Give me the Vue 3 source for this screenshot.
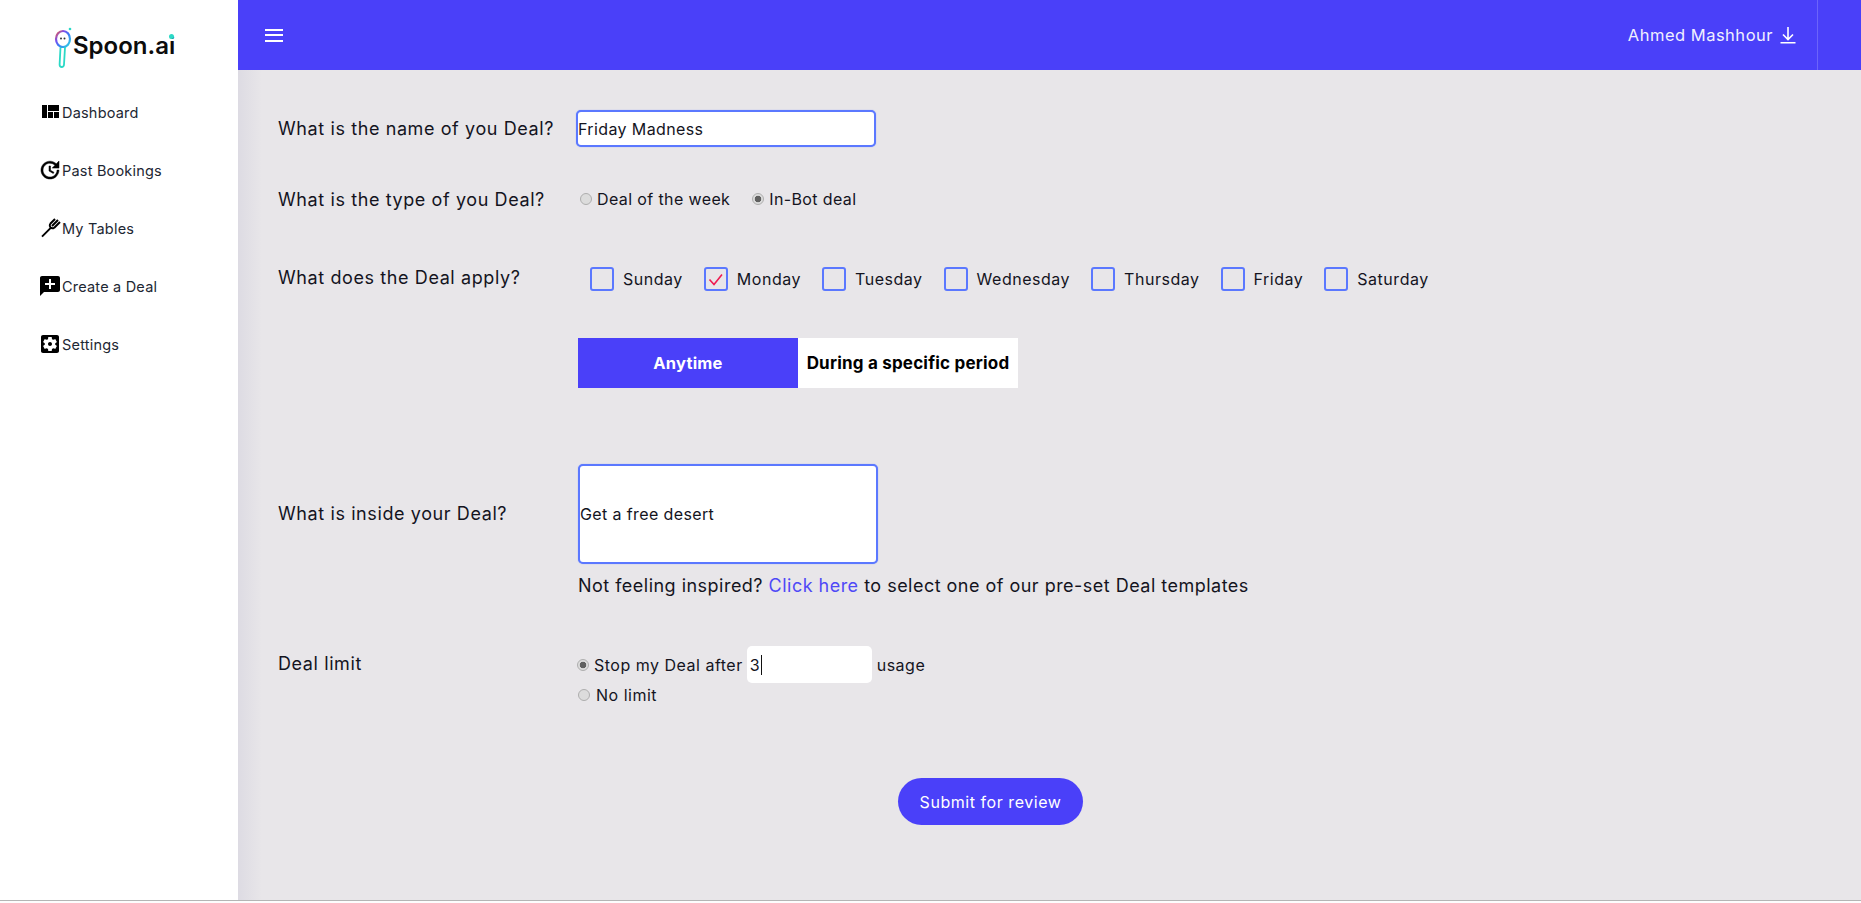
<script setup>
const nav = [
  { label: 'Dashboard', icon: 'M10 18h5v-6h-5v6zm-6 0h5V5H4v13zm12 0h5v-6h-5v6zM10 5v6h11V5H10z', fill: '#000', sw: 0 },
  { label: 'Past Bookings', icon: 'M21 10.12h-6.78l2.74-2.82c-2.73-2.7-7.15-2.8-9.88-.1-2.73 2.71-2.73 7.08 0 9.79s7.15 2.71 9.88 0C18.32 15.65 19 14.08 19 12.1h2c0 1.98-.88 4.55-2.64 6.29-3.51 3.48-9.21 3.48-12.72 0-3.5-3.47-3.53-9.11-.02-12.58s9.14-3.47 12.65 0L21 3v7.12zM12.5 8v4.25l3.5 2.08-.72 1.21L11 13V8h1.5z', fill: '#000', sw: 0.5 },
  { label: 'My Tables', icon: 'M4 20.6L13 11.6M12 8L17 3M14 10L20 4M16 12L22 6M12 8C11 11 13 13 16 12', fill: 'none', sw: 2 },
  { label: 'Create a Deal', icon: 'M2 4c0-1.1.9-2 2-2h16c1.1 0 2 .9 2 2v12c0 1.1-.9 2-2 2H6l-4 4V4zm9 1v4H7v2h4v4h2v-4h4V9h-4V5h-2z', fill: '#000', sw: 0 },
  { label: 'Settings', icon: 'M12 10c-1.1 0-2 .9-2 2s.9 2 2 2 2-.9 2-2-.9-2-2-2zm7-7H5c-1.11 0-2 .9-2 2v14c0 1.1.89 2 2 2h14c1.11 0 2-.9 2-2V5c0-1.1-.89-2-2-2zm-1.75 9c0 .23-.02.46-.05.68l1.48 1.16c.13.11.17.3.08.45l-1.4 2.42c-.09.15-.27.21-.43.15l-1.74-.7c-.36.28-.76.51-1.18.69l-.26 1.85c-.03.17-.18.3-.35.3h-2.8c-.17 0-.32-.13-.35-.29l-.26-1.85c-.43-.18-.82-.41-1.18-.69l-1.74.7c-.16.06-.34 0-.43-.15l-1.4-2.42c-.09-.15-.05-.34.08-.45l1.48-1.16c-.03-.23-.05-.46-.05-.69 0-.23.02-.46.05-.68l-1.48-1.16c-.13-.11-.17-.3-.08-.45l1.4-2.42c.09-.15.27-.21.43-.15l1.74.7c.36-.28.76-.51 1.18-.69l.26-1.85c.03-.17.18-.3.35-.3h2.8c.17 0 .32.13.35.29l.26 1.85c.43.18.82.41 1.18.69l1.74-.7c.16-.06.34 0 .43.15l1.4 2.42c.09.15.05.34-.08.45l-1.48 1.16c.03.23.05.46.05.69z', fill: '#000', sw: 0 }
]
const days = [
  { name: 'Sunday', on: false },
  { name: 'Monday', on: true },
  { name: 'Tuesday', on: false },
  { name: 'Wednesday', on: false },
  { name: 'Thursday', on: false },
  { name: 'Friday', on: false },
  { name: 'Saturday', on: false }
]
</script>

<template>
  <div class="shell">
    <aside class="side">
      <div class="logo">
        <svg class="spoon" width="20" height="42" viewBox="0 0 20 42" fill="none">
          <defs>
            <linearGradient id="head" x1="0" y1="0" x2="1" y2="1">
              <stop offset="0" stop-color="#f0603a" />
              <stop offset=".3" stop-color="#7a4df0" />
              <stop offset=".55" stop-color="#3a7cf5" />
              <stop offset="1" stop-color="#2bd9e0" />
            </linearGradient>
          </defs>
          <ellipse cx="9" cy="12" rx="7" ry="8" stroke="url(#head)" stroke-width="2.2" />
          <circle cx="7" cy="11.5" r="1" fill="#333" />
          <circle cx="10.5" cy="11.5" r="1" fill="#333" />
          <path d="M6.5 20.5 L5.6 37.5 C5.6 40.8 10 40.8 10 37.5 L11 20.5" stroke="#2bd9c6" stroke-width="1.8" />
          <circle cx="16" cy="2" r="1.3" fill="#2bd9c6" />
        </svg>
        <span class="logo-text">Spoon.ai<i class="logo-dot"></i></span>
      </div>
      <nav class="nav">
        <a v-for="item in nav" :key="item.label" class="nav-item">
          <svg width="24" height="24" viewBox="0 0 24 24" :fill="item.fill" stroke="#000" :stroke-width="item.sw"><path :d="item.icon" fill-rule="evenodd" /></svg>
          <span>{{ item.label }}</span>
        </a>
      </nav>
    </aside>

    <div class="main">
      <header class="top">
        <button class="burger" aria-label="Menu"><i></i><i></i><i></i></button>
        <div class="user">
          <span class="user-name">Ahmed Mashhour</span>
          <svg width="16" height="18" viewBox="0 0 16 18" fill="none" stroke="#fff" stroke-width="1.6">
            <path d="M8 1v12M3 8.5l5 5 5-5M.5 16.8h15" />
          </svg>
        </div>
        <div class="top-end"></div>
      </header>

      <form class="form" @submit.prevent>
        <div class="row row-name">
          <label class="lbl">What is the name of you Deal?</label>
          <input class="text-in" value="Friday Madness" />
        </div>

        <div class="row row-type">
          <label class="lbl">What is the type of you Deal?</label>
          <div class="radios">
            <label class="opt"><input type="radio" name="type" /><span>Deal of the week</span></label>
            <label class="opt"><input type="radio" name="type" checked /><span>In-Bot deal</span></label>
          </div>
        </div>

        <div class="row row-days">
          <label class="lbl">What does the Deal apply?</label>
          <div class="days">
            <label v-for="d in days" :key="d.name" class="day">
              <span class="box">
                <svg v-if="d.on" width="20" height="20" viewBox="0 0 20 20" fill="none" stroke="#ee1c52" stroke-width="1.6"><path d="M3.5 10.5l4.5 5 8-10" /></svg>
              </span>
              <span>{{ d.name }}</span>
            </label>
          </div>
        </div>

        <div class="row row-toggle">
          <span></span>
          <div class="toggle">
            <button type="button" class="tg tg-on">Anytime</button>
            <button type="button" class="tg">During a specific period</button>
          </div>
        </div>

        <div class="row row-inside">
          <label class="lbl lbl-inside">What is inside your Deal?</label>
          <div class="inside">
            <input class="text-in area" value="Get a free desert" />
            <p class="note">Not feeling inspired? <a class="link">Click here</a> to select one of our pre-set Deal templates</p>
          </div>
        </div>

        <div class="row row-limit">
          <label class="lbl lbl-limit">Deal limit</label>
          <div class="limits">
            <label class="opt opt-limit">
              <input type="radio" name="limit" checked />
              <span>Stop my Deal after</span>
              <span class="num"><span class="num-val">3</span></span>
              <span>usage</span>
            </label>
            <label class="opt opt-none"><input type="radio" name="limit" /><span>No limit</span></label>
          </div>
        </div>

        <div class="actions">
          <button type="submit" class="submit">Submit for review</button>
        </div>
      </form>
    </div>
  </div>
</template>

<style>
html, body { margin: 0; background: #fdfdfd; }
</style>

<style scoped>
.shell {
  display: flex;
  height: 900px;
  border-bottom: 1px solid #b5b5b5;
  font-family: Inter, "Noto Sans", sans-serif;
  color: #14141e;
  overflow: hidden;
}
.side { width: 238px; flex: none; background: #fff; }
.logo {
  display: flex;
  align-items: center;
  height: 42px;
  padding: 27px 0 0 54px;
}
.spoon { flex: none; margin-right: -1px; }
.logo-text {
  position: relative;
  font-family: Inter, sans-serif;
  font-weight: 600;
  font-size: 24px;
  letter-spacing: 0;
  color: #0c0c0c;
  margin-top: -6px;
}
.logo-dot {
  position: absolute;
  right: 1px;
  top: 3px;
  width: 5px;
  height: 5px;
  border-radius: 50%;
  background: #2bd9c6;
}
.nav { display: flex; flex-direction: column; margin-top: 14px; padding-left: 38px; }
.nav-item {
  display: flex;
  align-items: center;
  height: 58px;
  font-size: 14.5px;
  letter-spacing: 0.2px;
  color: #1d2733;
}
.main { flex: 1; min-width: 0; background: linear-gradient(90deg, #dddbe3 0, #e8e6e9 24px); display: flex; flex-direction: column; }
.top {
  height: 70px;
  flex: none;
  background: #4a40f9;
  display: flex;
  align-items: center;
  color: #fff;
  padding-left: 27px;
}
.burger {
  width: 18px; height: 13px; padding: 0; border: 0; background: none;
  display: flex; flex-direction: column; justify-content: space-between;
}
.burger i { display: block; height: 2px; background: #fff; }
.user {
  margin-left: auto;
  display: flex;
  align-items: center;
  gap: 7px;
  font-size: 16.5px;
  letter-spacing: 0.5px;
  color: #f0efff;
  padding-right: 21px;
}
.top-end { width: 44px; height: 70px; border-left: 1px solid #6c64fb; box-sizing: border-box; }

.form { padding-left: 40px; font-size: 18px; letter-spacing: 0.6px; }
.row { display: grid; grid-template-columns: 298px 1fr; align-items: center; }
.lbl { white-space: nowrap; }
.row-name { margin-top: 40px; height: 37px; }
.row-type { margin-top: 37px; height: 30px; }
.row-days { margin-top: 53px; height: 24px; }
.row-days .lbl { margin-top: -4px; }
.row-toggle { margin-top: 47px; height: 50px; }
.row-inside { margin-top: 76px; align-items: start; }
.lbl-inside { margin-top: 39px; }
.row-limit { margin-top: 50px; align-items: start; }
.lbl-limit { margin-top: 7px; }

.text-in {
  box-sizing: border-box;
  width: 300px;
  height: 37px;
  padding: 0;
  border: 2px solid #5b78ff;
  border-radius: 5px;
  box-shadow: 0 0 1px #7d93ff;
  background: #fff;
  outline: none;
  font: inherit;
  font-size: 16px;
  letter-spacing: 0.38px;
  color: #14141e;
}
input[type="radio"] {
  appearance: none;
  box-sizing: border-box;
  flex: none;
  width: 12px;
  height: 12px;
  margin: 0;
  border: 1px solid #aeaeae;
  border-radius: 50%;
  background: #dcdcdc;
}
input[type="radio"]:checked {
  background: radial-gradient(circle, #606060 0 3px, #dcdcdc 3.6px);
}
.radios { display: flex; gap: 22px; margin-left: 4px; font-size: 16px; letter-spacing: 0.38px; }
.opt { display: flex; align-items: center; gap: 5px; }
.days { display: flex; gap: 21px; margin-left: 14px; font-size: 16px; letter-spacing: 0.52px; }
.day { display: flex; align-items: center; gap: 9px; }
.box {
  box-sizing: border-box;
  width: 24px;
  height: 24px;
  border: 2px solid #5b78ff;
  border-radius: 3px;
  display: flex;
  align-items: center;
  justify-content: center;
}
.toggle { display: flex; margin-left: 2px; height: 50px; }
.tg {
  width: 220px;
  border: 0;
  padding: 0;
  background: #fff;
  color: #000;
  font: inherit;
  font-size: 17px;
  font-weight: 700;
  letter-spacing: 0.2px;
}
.tg-on { background: #4a40f9; color: #fff; font-size: 16.5px; }
.inside { margin-left: 2px; }
.area { height: 100px; display: block; width: 300px; }
.note { margin: 12px 0 0; line-height: 20px; white-space: nowrap; letter-spacing: 0.48px; }
.link { color: #4f49f7; }
.limits { display: flex; flex-direction: column; font-size: 16px; letter-spacing: 0.5px; }
.opt-limit { height: 37px; margin-left: 1px; gap: 5px; }
.num {
  box-sizing: border-box;
  width: 125px;
  height: 37px;
  background: #fff;
  border-radius: 5px;
  display: flex;
  align-items: center;
  padding-left: 3px;
  margin: 0 0 0 -1px;
}
.num-val { border-right: 1px solid #111; line-height: 20px; padding-right: 1px; }
.opt-none { margin: 2px 0 0 2px; height: 20px; gap: 6px; }
.actions { display: flex; margin: 73px 0 0 620px; }
.submit {
  width: 185px;
  height: 47px;
  border: 0;
  border-radius: 24px;
  background: #4a40f9;
  color: #fff;
  font: inherit;
  font-size: 16px;
  letter-spacing: 0.55px;
}
</style>
